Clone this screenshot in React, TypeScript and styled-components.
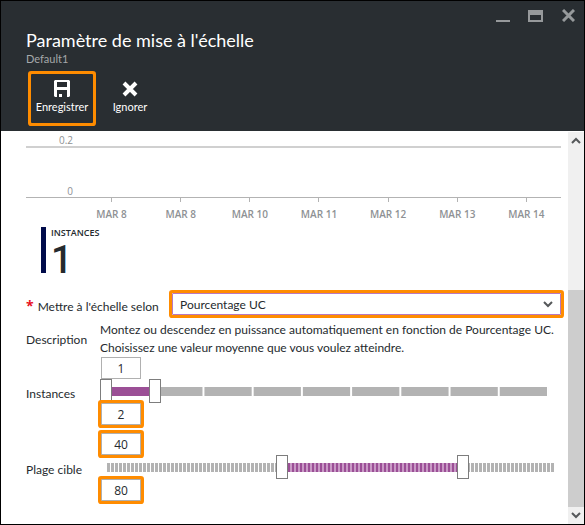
import React, { useState } from "react";
import styled, { createGlobalStyle, css } from "styled-components";

const color = {
  header: "#292e32",
  accent: "#ff8c00",
  text: "#252a2e",
  muted: "#8e9194",
  track: "#b3b3b3",
  purple: "#9b4f96",
  purpleLight: "#c99ac6",
};

const chartFont = `"Open Sans", "Noto Sans", sans-serif`;

const GlobalStyle = createGlobalStyle`
  * { box-sizing: border-box; }
  body { margin: 0; background: #fff; }
  body, button, input, select {
    font-family: Lato, "Open Sans", sans-serif;
    font-size: 12px;
    color: ${color.text};
  }
`;

const highlight = css`
  border-radius: 1px;
  box-shadow: 0 0 0 3px ${color.accent};
`;

const Blade = styled.div`
  display: flex;
  flex-direction: column;
  min-height: 100vh;
  border: 1px solid #000;
`;

const Header = styled.header`
  display: flex;
  flex-direction: column;
  padding-bottom: 5px;
  background: ${color.header};
  color: #fff;
`;

const WindowControls = styled.div`
  display: flex;
  justify-content: flex-end;
  gap: 12px;
  height: 27px;
  padding: 4px 5px 0 0;
`;

const WindowButton = styled.button`
  display: grid;
  place-items: center;
  width: 21px;
  height: 21px;
  padding: 0;
  border: 0;
  background: none;
`;

const Title = styled.h1`
  margin: 0;
  padding-left: 25px;
  font-size: 18px;
  font-weight: 400;
  line-height: 24px;
`;

const Subtitle = styled.p`
  margin: 0;
  padding-left: 25px;
  color: #a5a8aa;
  font-size: 11px;
  line-height: 14px;
`;

const Toolbar = styled.div`
  display: flex;
  gap: 6px;
  padding: 8px 30px 3px;
`;

const ToolButton = styled.button<{ $highlighted?: boolean }>`
  display: flex;
  flex-direction: column;
  align-items: center;
  gap: 2px;
  width: 62px;
  height: 49px;
  padding: 6px 0 0;
  border: 0;
  background: none;
  color: #fff;
  font-size: 11px;
  line-height: 16px;
  ${(p) => p.$highlighted && highlight}
`;

const Body = styled.div`
  flex: 1;
  display: grid;
  grid-template-columns: 1fr 16px;
`;

const Content = styled.main`
  min-width: 0;
  padding: 0 7px 8px 25px;
`;

const GridLine = styled.div<{ $height: number; $soft?: boolean }>`
  display: flex;
  align-items: flex-end;
  height: ${(p) => p.$height}px;
  border-bottom: ${(p) => (p.$soft ? "2px solid #d0d0d0" : `1px solid ${color.track}`)};
`;

const GridLabel = styled.span`
  width: 47px;
  color: ${color.muted};
  font-family: ${chartFont};
  font-size: 10px;
  line-height: 12px;
  text-align: right;
`;

const Axis = styled.div`
  display: grid;
  grid-template-columns: repeat(7, 1fr);
  padding-left: 51px;
`;

const AxisLabel = styled.span`
  display: flex;
  flex-direction: column;
  align-items: center;
  gap: 5px;
  color: ${color.muted};
  font-family: ${chartFont};
  font-size: 10px;
  font-weight: 600;
  line-height: 14px;
  &::before {
    content: "";
    width: 1px;
    height: 4px;
    background: ${color.track};
  }
`;

const Metric = styled.div`
  height: 46px;
  margin: 6px 0 17px 15px;
  padding-left: 5px;
  border-left: 5px solid #000b4a;
`;

const MetricName = styled.div`
  font-family: ${chartFont};
  font-size: 9px;
  font-weight: 600;
  line-height: 12px;
`;

const MetricValue = styled.div`
  font-family: Roboto, sans-serif;
  font-size: 38px;
  font-weight: 500;
  line-height: 42px;
`;

const Field = styled.div`
  display: flex;
  align-items: center;
`;

const RequiredLabel = styled.label`
  flex: none;
  width: 146px;
  padding-top: 2px;
  white-space: nowrap;
`;

const Star = styled.span`
  margin-right: 4px;
  color: #e81123;
  font-family: ${chartFont};
  font-size: 14px;
  font-weight: 700;
`;

const SelectBox = styled.div`
  flex: 1;
  display: grid;
  align-items: center;
  margin: 3px 0;
  border: 1px solid #b878c0;
  ${highlight}
  > * {
    grid-area: 1 / 1;
  }
  > svg {
    justify-self: end;
    margin-right: 7px;
    pointer-events: none;
  }
`;

const Select = styled.select`
  appearance: none;
  width: 100%;
  height: 20px;
  padding: 0 24px 0 7px;
  border: 0;
  background: #fff;
`;

const FormGrid = styled.div`
  display: grid;
  grid-template-columns: 74px 1fr;
  align-items: center;
  margin-top: 3px;
`;

const Description = styled.p`
  margin: 0;
  line-height: 18px;
`;

const RangeLabel = styled.label`
  padding-bottom: 4px;
`;

const RangeBox = styled.div`
  display: flex;
  flex-direction: column;
  align-items: flex-start;
  padding-bottom: 8px;
`;

const NumberInput = styled.input<{ $highlighted?: boolean }>`
  width: 40px;
  height: 22px;
  margin-left: 1px;
  padding: 0;
  border: 1px solid #b0b0b0;
  background: #fff;
  font-family: ${chartFont};
  text-align: center;
  ${(p) => p.$highlighted && highlight}
`;

const Slider = styled.div<{ $end: number }>`
  display: grid;
  align-items: center;
  align-self: stretch;
  margin-right: ${(p) => p.$end}px;
  > * {
    grid-area: 1 / 1;
  }
`;

const Track = styled.div<{ $fine?: boolean }>`
  height: 9px;
  margin: 0 6px;
  background: ${(p) =>
    p.$fine
      ? `repeating-linear-gradient(90deg, #fff 0 1px, ${color.track} 1px 4px)`
      : `linear-gradient(90deg, ${color.track} calc(100% - 2px), #fff 0) 0 0 / calc(100% / 9) 100%`};
`;

const Fill = styled.div<{ $fine?: boolean }>`
  height: 9px;
  background: ${(p) =>
    p.$fine
      ? `repeating-linear-gradient(90deg, ${color.purpleLight} 0 2px, ${color.purple} 2px 4px)`
      : color.purple};
`;

const Thumb = styled.input`
  appearance: none;
  width: 100%;
  height: 24px;
  margin: 0;
  background: none;
  pointer-events: none;
  &::-webkit-slider-thumb {
    appearance: none;
    width: 12px;
    height: 24px;
    border: 1px solid #7d7d7d;
    border-radius: 0;
    background: #fff;
    pointer-events: auto;
  }
`;

const Scrollbar = styled.div`
  display: flex;
  flex-direction: column;
  margin-top: 1px;
  background: #f0f0f0;
`;

const ScrollButton = styled.button`
  display: grid;
  place-items: center;
  height: 17px;
  padding: 0;
  border: 0;
  background: none;
`;

const ScrollSpace = styled.div`
  flex: 141;
`;

const ScrollThumb = styled.div`
  flex: 217;
  background: #cdcdcd;
`;

const Chevron = ({ up = false }: { up?: boolean }) => (
  <svg width="10" height="7" viewBox="0 0 10 7" fill="none" stroke="#55585a" strokeWidth="2">
    <path d={up ? "M1 6L5 2L9 6" : "M1 1L5 5L9 1"} />
  </svg>
);

interface RangeProps {
  id: string;
  label: string;
  min: number;
  max: number;
  initial: [number, number];
  fine?: boolean;
  end: number;
  lowHighlighted?: boolean;
}

function Range({ id, label, min, max, initial, fine, end, lowHighlighted }: RangeProps) {
  const [low, setLow] = useState(initial[0]);
  const [high, setHigh] = useState(initial[1]);
  const percent = (v: number) => ((v - min) / (max - min)) * 100;
  return (
    <>
      <RangeLabel htmlFor={id}>{label}</RangeLabel>
      <RangeBox>
        <NumberInput
          id={id}
          $highlighted={lowHighlighted}
          value={low}
          onChange={(e) => setLow(Number(e.target.value) || min)}
        />
        <Slider $end={end}>
          <Track $fine={fine}>
            <Fill
              $fine={fine}
              style={{ marginLeft: `${percent(low)}%`, width: `${percent(high) - percent(low)}%` }}
            />
          </Track>
          <Thumb type="range" aria-label={`${label} minimum`} min={min} max={max} value={low}
            onChange={(e) => setLow(Math.min(Number(e.target.value), high))} />
          <Thumb type="range" aria-label={`${label} maximum`} min={min} max={max} value={high}
            onChange={(e) => setHigh(Math.max(Number(e.target.value), low))} />
        </Slider>
        <NumberInput
          aria-label={`${label} maximum`}
          $highlighted
          value={high}
          onChange={(e) => setHigh(Number(e.target.value) || min)}
        />
      </RangeBox>
    </>
  );
}

const days = ["MAR 8", "MAR 8", "MAR 10", "MAR 11", "MAR 12", "MAR 13", "MAR 14"];

export default function App() {
  return (
    <Blade>
      <GlobalStyle />
      <Header>
        <WindowControls>
          <WindowButton aria-label="Réduire">
            <svg width="14" height="14" fill="#96999b"><path d="M0 11h14v2H0z" /></svg>
          </WindowButton>
          <WindowButton aria-label="Agrandir">
            <svg width="15" height="12" fill="#96999b" fillRule="evenodd"><path d="M0 0h15v12H0zM2 5v5h11V5z" /></svg>
          </WindowButton>
          <WindowButton aria-label="Fermer">
            <svg width="13" height="13" stroke="#96999b" strokeWidth="3"><path d="M1 1L12 12M12 1L1 12" /></svg>
          </WindowButton>
        </WindowControls>
        <Title>Paramètre de mise à l'échelle</Title>
        <Subtitle>Default1</Subtitle>
        <Toolbar>
          <ToolButton $highlighted>
            <svg width="16" height="17" viewBox="0 0 16 17" fill="#fff" fillRule="evenodd">
              <path d="M1 0H15L16 1V16L15 17H1L0 16V1ZM3 2V7H13V2ZM3 10V17H13V10Z" />
              <path d="M5 14H8V17H5Z" />
            </svg>
            Enregistrer
          </ToolButton>
          <ToolButton>
            <svg width="16" height="17" viewBox="0 0 16 17" stroke="#fff" strokeWidth="4">
              <path d="M2 3L14 15M14 3L2 15" />
            </svg>
            Ignorer
          </ToolButton>
        </Toolbar>
      </Header>
      <Body>
        <Content>
          <GridLine $height={17} $soft><GridLabel>0.2</GridLabel></GridLine>
          <GridLine $height={50}><GridLabel>0</GridLabel></GridLine>
          <Axis>
            {days.map((d, i) => <AxisLabel key={i}>{d}</AxisLabel>)}
          </Axis>
          <Metric>
            <MetricName>INSTANCES</MetricName>
            <MetricValue>1</MetricValue>
          </Metric>
          <Field>
            <RequiredLabel htmlFor="metric"><Star>*</Star>Mettre à l'échelle selon</RequiredLabel>
            <SelectBox>
              <Select id="metric"><option>Pourcentage UC</option></Select>
              <Chevron />
            </SelectBox>
          </Field>
          <FormGrid>
            <span>Description</span>
            <Description>
              Montez ou descendez en puissance automatiquement en fonction de Pourcentage UC.
              Choisissez une valeur moyenne que vous voulez atteindre.
            </Description>
            <Range id="instances" label="Instances" min={1} max={10} initial={[1, 2]} end={6} />
            <Range id="target" label="Plage cible" min={1} max={100} initial={[40, 80]} fine end={1} lowHighlighted />
          </FormGrid>
        </Content>
        <Scrollbar>
          <ScrollButton aria-label="Défiler vers le haut"><Chevron up /></ScrollButton>
          <ScrollSpace />
          <ScrollThumb />
          <ScrollButton aria-label="Défiler vers le bas"><Chevron /></ScrollButton>
        </Scrollbar>
      </Body>
    </Blade>
  );
}
